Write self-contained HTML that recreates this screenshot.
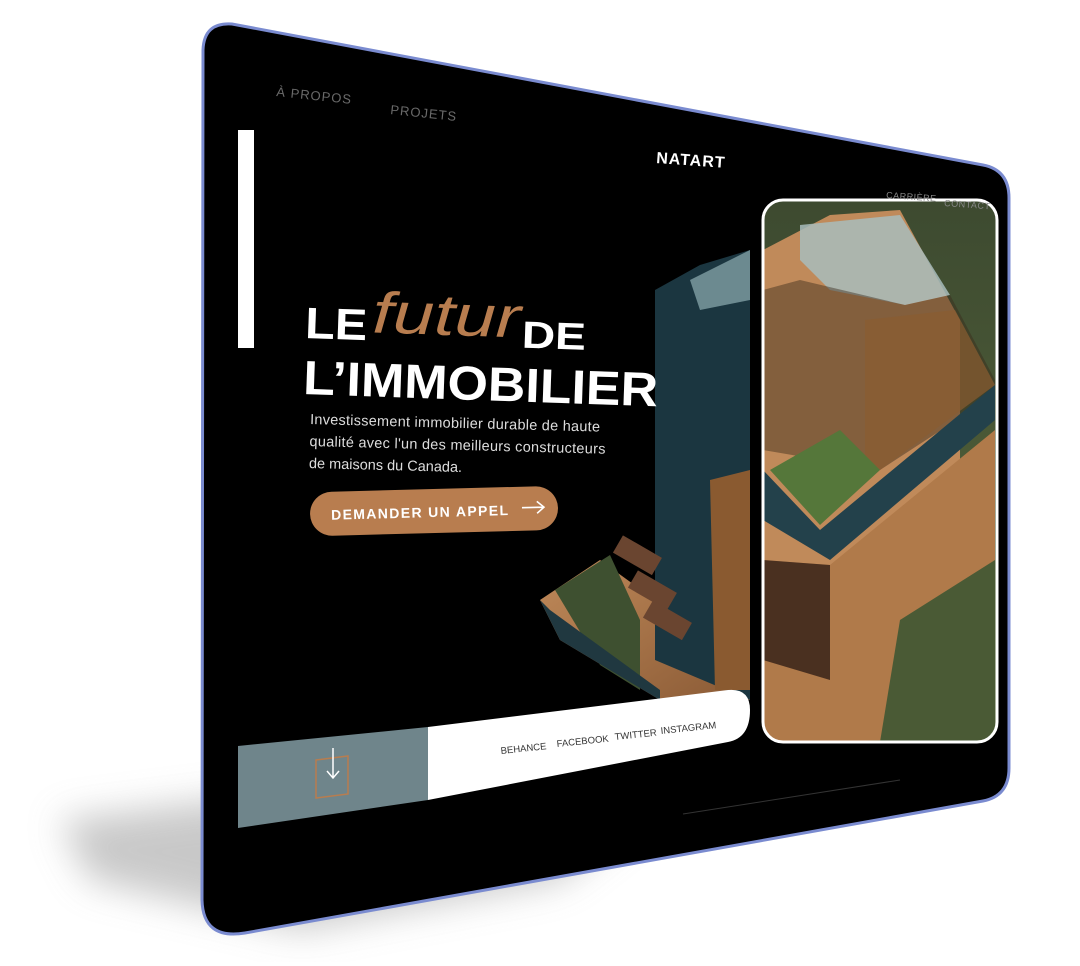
<!DOCTYPE html>
<html><head><meta charset="utf-8"><style>
html,body{margin:0;padding:0;background:#fff;}
svg{display:block}
text{font-family:"Liberation Sans",sans-serif}
</style></head><body>
<svg width="1080" height="966" viewBox="0 0 1080 966" xmlns="http://www.w3.org/2000/svg">
<defs>
<filter id="blur" x="-20%" y="-20%" width="140%" height="140%"><feGaussianBlur stdDeviation="18"/></filter>
<linearGradient id="wood" x1="0" y1="0" x2="1" y2="1"><stop offset="0" stop-color="#c08a5a"/><stop offset="1" stop-color="#8a5a35"/></linearGradient>
<linearGradient id="forest" x1="0" y1="0" x2="0" y2="1"><stop offset="0" stop-color="#3d4a30"/><stop offset="1" stop-color="#5a6a3e"/></linearGradient>
<clipPath id="panel"><rect x="763" y="200" width="234" height="542" rx="20"/></clipPath>
</defs>
<polygon points="60,820 300,790 700,770 560,880 300,930 90,880" fill="#bbb" filter="url(#blur)" opacity="0.8"/>
<path d="M203,50 Q204,22 232,24 L983,165 Q1009,170 1009,198 L1009,768 Q1009,796 983,801 L245,933 Q203,940 202,900 Z" fill="#000" stroke="#7a8bd0" stroke-width="3"/>
<rect x="238" y="130" width="16" height="218" fill="#fff"/>
<!-- building -->
<polygon points="540,600 600,560 655,600 750,640 750,700 660,700 560,640" fill="url(#wood)"/>
<polygon points="555,590 610,555 640,620 640,690 600,665" fill="#3e5030"/>
<polygon points="655,290 700,265 750,250 750,700 655,660" fill="#1b3640"/>
<polygon points="690,280 750,250 750,300 700,310" fill="#6c8a90"/>
<polygon points="710,480 750,470 750,690 715,690" fill="#8a5a30"/>
<polygon points="540,600 560,640 660,700 660,690 550,610" fill="#203840"/>
<rect x="615" y="545" width="45" height="20" fill="#6a4530" transform="rotate(30 637 555)"/>
<rect x="630" y="580" width="45" height="20" fill="#6a4530" transform="rotate(30 652 590)"/>
<rect x="645" y="610" width="45" height="20" fill="#6a4530" transform="rotate(30 667 620)"/>
<g clip-path="url(#panel)">
<rect x="763" y="200" width="234" height="542" fill="url(#forest)"/>
<polygon points="763,250 830,215 900,210 960,320 960,520 880,600 763,560" fill="#c08a5a"/>
<polygon points="800,225 900,215 950,295 905,305 830,290 800,260" fill="#a8bcbc" opacity="0.85"/>
<polygon points="763,290 800,280 905,305 950,295 995,380 995,395 880,470 763,450" fill="#3a2a1a" opacity="0.45"/>
<polygon points="865,320 955,310 995,385 880,470 865,460" fill="#8a5d30" opacity="0.7"/>
<polygon points="770,470 840,430 880,470 820,525" fill="#55773a"/>
<polygon points="763,470 820,530 995,385 995,420 830,560 763,520" fill="#23414b"/>
<polygon points="763,560 830,565 995,430 995,640 900,740 763,742" fill="#b07a4a"/>
<polygon points="763,560 830,565 830,680 763,660" fill="#4a3020"/>
<polygon points="900,620 995,560 995,742 880,742" fill="#4a5a35"/>
</g>
<rect x="763" y="200" width="234" height="542" rx="20" fill="none" stroke="#fff" stroke-width="3"/>
<!-- nav -->
<text x="276" y="96" fill="#6a6a6a" font-size="13" letter-spacing="1" transform="rotate(6 276 96)">À PROPOS</text>
<text x="390" y="114" fill="#6a6a6a" font-size="13" letter-spacing="1" transform="rotate(6 390 114)">PROJETS</text>
<text x="656" y="163" fill="#fff" font-size="16" font-weight="900" letter-spacing="1" transform="rotate(4 656 163)">NATART</text>
<text x="886" y="198" fill="#888" font-size="9" letter-spacing="0.5" transform="rotate(4 886 198)">CARRIÈRE</text>
<text x="944" y="206" fill="#888" font-size="9" letter-spacing="0.5" transform="rotate(4 944 206)">CONTACT</text>
<!-- headline -->
<g transform="rotate(2 305 330)">
<text x="305" y="338" fill="#fff" font-size="44" font-weight="900" textLength="62" lengthAdjust="spacingAndGlyphs">LE</text>
<text x="372" y="330" fill="#b87d4f" font-size="58" font-style="italic" font-family="'Liberation Serif'" textLength="148" lengthAdjust="spacingAndGlyphs">futur</text>
<text x="522" y="340" fill="#fff" font-size="38" font-weight="900" textLength="64" lengthAdjust="spacingAndGlyphs">DE</text>
<text x="305" y="394" fill="#fff" font-size="48" font-weight="900" textLength="355" lengthAdjust="spacingAndGlyphs">L’IMMOBILIER</text>
</g>
<g transform="rotate(1.5 310 424)" fill="#ddd" font-size="14.5">
<text x="310" y="424" textLength="290">Investissement immobilier durable de haute</text>
<text x="310" y="446" textLength="296">qualité avec l'un des meilleurs constructeurs</text>
<text x="310" y="468">de maisons du Canada.</text>
</g>
<g transform="rotate(-1.5 435 510)">
<rect x="310" y="489" width="248" height="44" rx="22" fill="#b87d4f"/>
<text x="331" y="517" fill="#fff" font-size="14" font-weight="900" letter-spacing="1" textLength="178">DEMANDER UN APPEL</text>
<path d="M522,510 H544 M537,504 L544,510 L537,516" stroke="#fff" stroke-width="1.6" fill="none"/>
</g>
<polygon points="238,746 428,727 428,800 238,828" fill="#6f858b"/>
<path d="M428,727 L728,690 Q750,688 750,710 Q750,738 728,742 L428,800 Z" fill="#fff"/>
<polygon points="316,760 348,756 348,794 316,798" fill="none" stroke="#b87d4f" stroke-width="1.5"/>
<path d="M333,748 V778 M327,771 L333,778 L339,771" stroke="#fff" stroke-width="1.5" fill="none"/>
<g fill="#333" font-size="9.5">
<text x="501" y="754" transform="rotate(-6 501 754)">BEHANCE</text>
<text x="557" y="747" transform="rotate(-6 557 747)">FACEBOOK</text>
<text x="615" y="740" transform="rotate(-6 615 740)">TWITTER</text>
<text x="661" y="734" transform="rotate(-6 661 734)">INSTAGRAM</text>
</g>
<line x1="683" y1="814" x2="900" y2="780" stroke="#333" stroke-width="1"/>
</svg>
</body></html>
